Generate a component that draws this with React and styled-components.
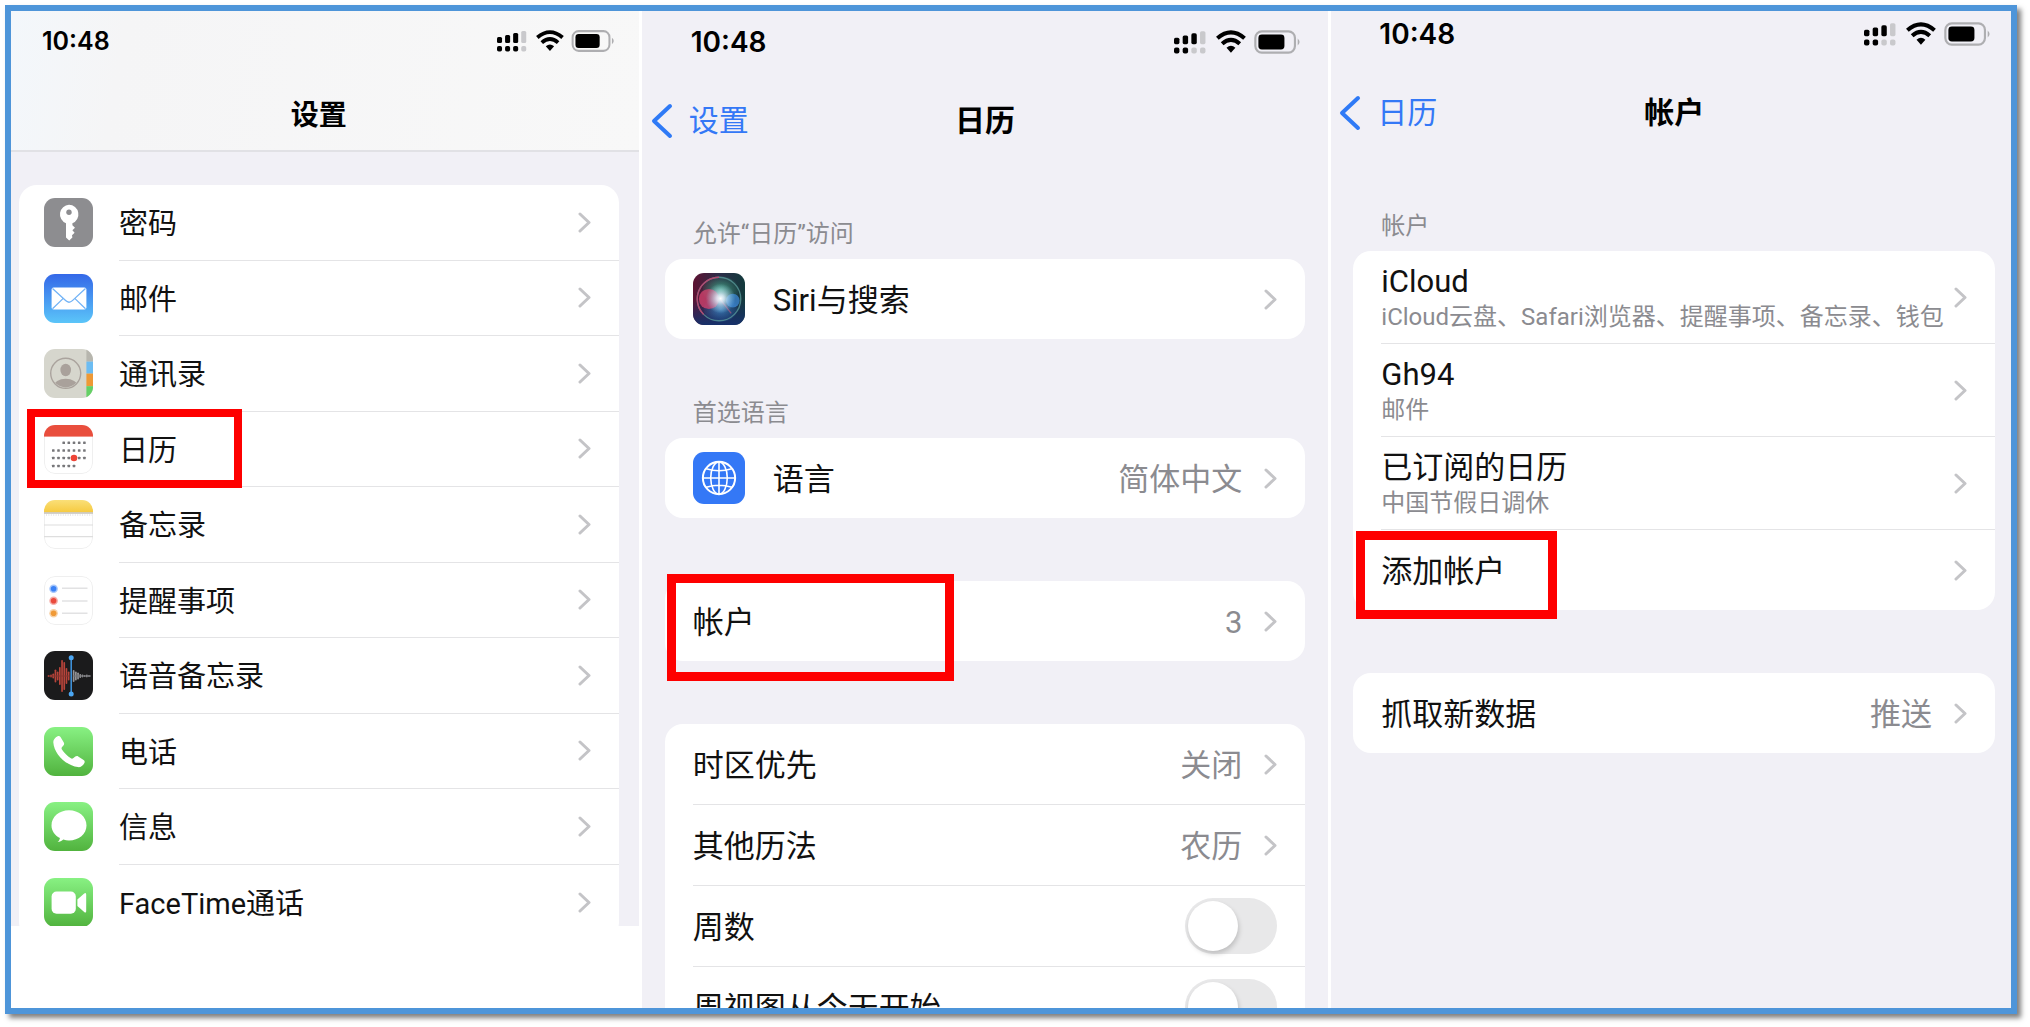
import React from 'react';
import styled, { createGlobalStyle, css, ThemeProvider } from 'styled-components';

const compact = { icon: 49, iconGap: 26, text: 29, inset: 25, row: 74, time: 25, title: 28, status: 119 };
const regular = { icon: 52, iconGap: 28, text: 31, inset: 28, row: 80, time: 28, title: 30, status: 128 };

const GlobalStyle = createGlobalStyle`
  * {
    box-sizing: border-box;
  }
  body {
    margin: 0;
    background: white;
    color: #111;
    font-family: Roboto, "Noto Sans CJK SC", sans-serif;
  }
`;

const Frame = styled.main`
  display: grid;
  grid-template-columns: 628fr 687fr 680fr;
  grid-template-rows: minmax(0, 1fr);
  column-gap: 3px;
  height: calc(100vh - 18px);
  margin: 5px 13px 13px 5px;
  border: 6px solid #4e95d9;
  background: white;
  box-shadow: 4px 4px 5px rgba(0,0,0,0.5);
`;

const Screen = styled.section`
  min-width: 0;
  overflow: hidden;
  background: #f1f0f6;
  margin-bottom: ${props => props.$cut || 0}px;
`;

const TopBar = styled.header`
  padding: ${props => props.$pad};
  ${props => props.$raised && css`
    background: linear-gradient(100deg, #f3f7fb 0, #f5f5f6 18%, #f8f8f8 100%);
    border-bottom: 2px solid #e1e1e5;
  `}
`;

const StatusBar = styled.div`
  display: flex;
  align-items: center;
  justify-content: space-between;
  padding: 0 3px 0 ${props => props.theme.inset - 2}px;
  height: 32px;
`;

const Time = styled.time`
  font: 600 ${props => props.theme.time}px/32px Inter, sans-serif;
  color: black;
`;

const StatusIcons = styled.svg`
  width: ${props => props.theme.status}px;
  height: 24px;
`;

const NavBar = styled.nav`
  display: grid;
  grid-template-columns: 1fr auto 1fr;
  align-items: center;
  height: 40px;
  margin-top: ${props => props.$gap}px;
`;

const BackLink = styled.a`
  display: flex;
  align-items: center;
  gap: 16px;
  margin-left: -14px;
  color: #3478f6;
  font-size: 30px;
  line-height: 40px;
  text-decoration: none;
`;

const Title = styled.h1`
  grid-column: 2;
  margin: 0;
  color: black;
  font-size: ${props => props.theme.title}px;
  line-height: 40px;
  font-weight: 700;
`;

const Content = styled.div`
  padding: ${props => props.$pad};
`;

const Group = styled.section`
  & + & {
    margin-top: 63px;
  }
`;

const GroupLabel = styled.h2`
  margin: 0;
  padding: 0 28px 14px;
  color: #8b8b90;
  font-size: 24px;
  line-height: 22px;
  font-weight: 400;
`;

const Card = styled.ul`
  display: grid;
  margin: 0;
  padding: 0;
  list-style: none;
  background: white;
  border-radius: 18px;
  ${props => props.$even && css`
    grid-auto-rows: 1fr;
    min-height: 755px;
  `}
`;

const Item = styled.li`
  display: grid;
  position: relative;
`;

const RowLine = styled.a`
  display: flex;
  align-items: center;
  gap: ${props => props.theme.iconGap}px;
  padding-left: ${props => props.theme.inset}px;
  color: inherit;
  text-decoration: none;
`;

const RowBody = styled.span`
  display: flex;
  flex: 1;
  align-self: stretch;
  align-items: center;
  min-width: 0;
  box-sizing: content-box;
  min-height: ${props => props.$tall ? 92 : props.theme.row}px;
  padding-right: 28px;
  ${Item}:not(:last-child) & {
    border-bottom: 1px solid #e4e4e6;
  }
`;

const RowText = styled.span`
  flex: 1;
  min-width: 0;
  white-space: nowrap;
  font-size: ${props => props.theme.text}px;
  line-height: 36px;
  padding-top: 4px;
`;

const RowNote = styled.small`
  display: block;
  color: #8b8b90;
  font-size: 24px;
  line-height: 34px;
`;

const RowValue = styled.span`
  margin-right: 22px;
  padding-top: 4px;
  color: #8b8b90;
  font-size: 31px;
  line-height: 36px;
`;

const Switch = styled.input`
  appearance: none;
  display: flex;
  width: 92px;
  height: 56px;
  margin: 0;
  padding: 3px;
  border-radius: 28px;
  background: #e8e8e9;
  &::before {
    content: "";
    width: 50px;
    height: 50px;
    border-radius: 50%;
    background: white;
    box-shadow: 1px 3px 5px rgba(0,0,0,0.18);
  }
  &:checked {
    justify-content: flex-end;
    background: #34c759;
  }
`;

const AppIcon = styled.svg`
  flex: none;
  width: ${props => props.theme.icon}px;
  height: ${props => props.theme.icon}px;
  border-radius: 11px;
`;

// red frame laid over a row
const Marker = styled.span`
  position: absolute;
  top: ${props => props.$top}px;
  left: ${props => props.$left}px;
  width: ${props => props.$width}px;
  height: ${props => props.$height}px;
  border: ${props => props.$line || 9}px solid #fe0000;
  z-index: 1;
  pointer-events: none;
`;

const Chevron = () => (
  <svg width="13" height="21" viewBox="0 0 13 21" fill="none" stroke="#c4c4c7" strokeWidth="3" strokeLinecap="round" strokeLinejoin="round">
    <path d="M2 2L11 10.5L2 19" />
  </svg>
);

const Status = ({ bars }) => (
  <StatusIcons viewBox="0 0 118 22" aria-hidden="true">
    <g>
      <rect x="0" y="7" width="5" height="6" rx="1.5" />
      <rect x="8" y="5" width="5" height="8" rx="1.5" />
      <rect x="16" y="3" width="5" height="10" rx="1.5" />
      <rect x="24" y="1" width="5" height="12" rx="1.5" fill="#c9c9cc" />
      {[0, 8, 16, 24].map((x, i) => (
        <rect key={x} x={x} y="16" width="5" height="5.5" rx="1.8" fill={i < bars ? 'black' : '#c9c9cc'} />
      ))}
    </g>
    <g fill="none" stroke="black" strokeWidth="3.8">
      <path d="M40 7.6Q52.5 -3.2 65 7.6" />
      <path d="M44.4 12.6Q52.5 5.6 60.6 12.6" />
    </g>
    <path d="M48.4 16.3Q52.5 12.8 56.6 16.3L52.5 21Z" />
    <rect x="75" y="1.2" width="36.5" height="19.6" rx="6" fill="none" stroke="#aeaeb1" strokeWidth="2" />
    <rect x="77.8" y="4" width="24" height="14" rx="3.2" />
    <path d="M114 7.8Q117.5 11 114 14.2Z" fill="#aeaeb1" />
  </StatusIcons>
);

const green = (id) => (
  <>
    <linearGradient id={id} x1="0" y1="0" x2="0" y2="1">
      <stop offset="0" stopColor="#88f183" />
      <stop offset="1" stopColor="#51b33e" />
    </linearGradient>
    <rect width="49" height="49" fill={`url(#${id})`} />
  </>
);

const whiteTile = <rect x="0.5" y="0.5" width="48" height="48" rx="10.5" fill="white" stroke="#efefef" />;

const calendarCols = [9.3, 14.5, 19.7, 24.8, 30, 35.2, 40.4];
const calendarRows = [[17.7, 2, 6], [25.5, 0, 6], [33, 0, 6], [41, 0, 4]];
const redWave = [[4.5, 1], [7, 1.5], [9.2, 2.5], [11.4, 6.5], [13.6, 4.5], [15.8, 9], [18, 16], [20.2, 14], [22.4, 8], [24.6, 4.5]];
const grayWave = [[29.6, 6], [31.8, 4.5], [34, 3.5], [36.2, 2], [38.4, 1.4], [40.6, 1], [42.8, 1.4], [45, 1]];

const icons = {
  key: (
    <>
      <rect width="49" height="49" fill="#8d8d90" />
      <path d="M25 6.8A9.6 9.6 0 0 1 28.4 25.3V27.2L31 29.7L28.4 32.2L30.6 34.8L28 37.3L28.4 39.6L25.2 42.4L22 39.4V25.3A9.6 9.6 0 0 1 25 6.8Z" fill="white" />
      <circle cx="25" cy="14.2" r="2.7" fill="#8d8d90" />
    </>
  ),
  mail: (
    <>
      <linearGradient id="mail" x1="0" y1="0" x2="0" y2="1">
        <stop offset="0" stopColor="#3468e8" />
        <stop offset="1" stopColor="#5bc5f9" />
      </linearGradient>
      <rect width="49" height="49" fill="url(#mail)" />
      <rect x="7.6" y="13.6" width="34.8" height="22" rx="2" fill="white" />
      <path d="M8.5 14.5L21.6 26.6Q25 29.8 28.4 26.6L41.5 14.5M8.5 34.8L19 24.6M41.5 34.8L31 24.6" fill="none" stroke="#72b3f6" strokeWidth="1.3" />
    </>
  ),
  contacts: (
    <>
      <clipPath id="face"><circle cx="21.7" cy="24.3" r="14" /></clipPath>
      <rect width="49" height="49" fill="#d6d6cd" />
      <rect x="42.4" width="7" height="12.6" fill="#b7b6ae" />
      <rect x="42.4" y="12.6" width="7" height="12" fill="#6cbcf2" />
      <rect x="42.4" y="24.6" width="7" height="12.6" fill="#ee9936" />
      <rect x="42.4" y="37.2" width="7" height="12" fill="#64d065" />
      <circle cx="21.7" cy="24.3" r="15" fill="none" stroke="#aaa39d" strokeWidth="1.4" />
      <ellipse cx="21.7" cy="21" rx="5.3" ry="6.2" fill="#a9a19b" />
      <ellipse cx="21.7" cy="37.4" rx="12" ry="7.6" fill="#a9a19b" clipPath="url(#face)" />
    </>
  ),
  calendar: (
    <>
      {whiteTile}
      <rect width="49" height="11.6" fill="#e94e3d" />
      {calendarRows.map(([y, from, to]) => calendarCols.slice(from, to + 1).map(x => (
        <rect key={`${x}-${y}`} x={x - 1.3} y={y - 1.3} width="2.6" height="2.6" rx="0.6" fill="#77777a" />
      )))}
      <circle cx="30" cy="33" r="3.3" fill="#ee4436" />
    </>
  ),
  notes: (
    <>
      <linearGradient id="notes" x1="0" y1="0" x2="0" y2="1">
        <stop offset="0" stopColor="#fadf78" />
        <stop offset="1" stopColor="#f6ca40" />
      </linearGradient>
      {whiteTile}
      <rect width="49" height="12.4" fill="url(#notes)" />
      <path d="M0 13H49" stroke="#c4c0b8" strokeWidth="1.4" />
      <path d="M2 15H48" stroke="#d4d4d4" strokeWidth="1" strokeDasharray="1 1.4" />
      <path d="M0 25H49M0 36.6H49" stroke="#dedede" strokeWidth="1.2" />
    </>
  ),
  reminders: (
    <>
      {whiteTile}
      <path d="M18 12.2H43.5M18 25H43.5M18 37.2H43.5" stroke="#e2e2e3" strokeWidth="1.4" />
      {[['#3b82f6', 12.8], ['#ea4a3d', 24.8], ['#f09a37', 37.2]].map(([color, y]) => (
        <g key={y} fill={color}>
          <circle cx="9.6" cy={y} r="4.3" opacity="0.45" />
          <circle cx="9.6" cy={y} r="2.8" />
        </g>
      ))}
    </>
  ),
  voice: (
    <>
      <rect width="49" height="49" fill="#1b1b1c" />
      {redWave.map(([x, h]) => <rect key={x} x={x - 0.8} y={25 - h} width="1.7" height={h * 2} rx="0.8" fill="#b8443a" />)}
      {grayWave.map(([x, h]) => <rect key={x} x={x - 0.8} y={25 - h} width="1.7" height={h * 2} rx="0.8" fill="#949496" />)}
      <path d="M4 25H25" stroke="#8a352e" strokeWidth="1" />
      <path d="M29 25H47" stroke="#77777a" strokeWidth="1" />
      <path d="M27.2 6.5V43" stroke="#3d8fd6" strokeWidth="1.6" />
      <circle cx="27.2" cy="6.8" r="2.5" fill="#4ba6f2" />
      <circle cx="27.2" cy="43" r="2.5" fill="#4ba6f2" />
    </>
  ),
  phone: (
    <>
      {green('phone')}
      <path d="M9.3 15.2C9.2 12.8 11.2 10.4 13.6 9.2C14.8 8.6 15.8 8.9 16.5 10L19.8 15.5C20.4 16.6 20.2 17.6 19.4 18.5L17.9 20.3C17.4 21 17.4 21.7 17.9 22.5C20.2 26 23.3 29 26.9 31.3C27.7 31.8 28.4 31.8 29.1 31.2L31.3 29.6C32.2 28.9 33.2 28.8 34.2 29.4L39.6 33C40.7 33.8 41 34.7 40.4 35.9C39 38.6 36.6 40.4 33.9 40.1C22 38.5 10 27 9.3 15.2Z" fill="white" />
    </>
  ),
  messages: (
    <>
      {green('messages')}
      <path d="M25 8.2C34.8 8.2 42.5 14.8 42.5 23.4S34.8 38.4 25 38.4C23 38.4 21.1 38.2 19.3 37.6C17.6 39 15.8 39.9 13.6 40.1C15 38.9 15.8 37.3 15.9 35.9C10.7 33.2 7.5 28.7 7.5 23.4C7.5 14.8 15.2 8.2 25 8.2Z" fill="white" />
    </>
  ),
  facetime: (
    <>
      {green('facetime')}
      <rect x="7.6" y="13.6" width="24.2" height="22.2" rx="5" fill="white" />
      <path d="M33.4 21.4L40.2 15.4Q42.2 14 42.2 16.4V33Q42.2 35.4 40.2 34L33.4 28Z" fill="white" />
    </>
  ),
  siri: (
    <>
      <linearGradient id="siriBg" x1="0" y1="0" x2="1" y2="0">
        <stop offset="0" stopColor="#5e1232" />
        <stop offset="0.5" stopColor="#2c2c48" />
        <stop offset="1" stopColor="#123a3c" />
      </linearGradient>
      <linearGradient id="siriLow" x1="0" y1="0" x2="0" y2="1">
        <stop offset="0.5" stopColor="#16306a" stopOpacity="0" />
        <stop offset="1" stopColor="#16306a" />
      </linearGradient>
      <radialGradient id="siriGreen">
        <stop offset="0" stopColor="#4aa588" />
        <stop offset="1" stopColor="#2f8468" stopOpacity="0.15" />
      </radialGradient>
      <radialGradient id="siriBlue">
        <stop offset="0" stopColor="#4a9fe0" />
        <stop offset="1" stopColor="#2c6fb4" stopOpacity="0.2" />
      </radialGradient>
      <radialGradient id="siriGlow">
        <stop offset="0" stopColor="white" />
        <stop offset="0.25" stopColor="#e4f4ff" stopOpacity="0.85" />
        <stop offset="1" stopColor="#8fd0e8" stopOpacity="0" />
      </radialGradient>
      <rect width="49" height="49" fill="url(#siriBg)" />
      <rect width="49" height="49" fill="url(#siriLow)" />
      <ellipse cx="26" cy="16" rx="17" ry="13" fill="url(#siriGreen)" />
      <ellipse cx="26" cy="34" rx="16" ry="12" fill="url(#siriBlue)" opacity="0.7" />
      <circle cx="15" cy="24.5" r="9.5" fill="#d8436f" opacity="0.75" />
      <circle cx="37.5" cy="26" r="6.5" fill="#3f8fe0" opacity="0.7" />
      <path d="M25 24L36 38" stroke="#c8577f" strokeWidth="1.2" opacity="0.6" />
      <circle cx="24.5" cy="24.5" r="20.5" fill="none" stroke="#5b9c9c" strokeWidth="1.3" opacity="0.75" />
      <path d="M24.5 4A20.5 20.5 0 0 0 10 39" fill="none" stroke="#b04a70" strokeWidth="1.3" />
      <circle cx="26" cy="24" r="14" fill="url(#siriGlow)" />
    </>
  ),
  globe: (
    <>
      <rect width="49" height="49" fill="#3478f6" />
      <g fill="none" stroke="white" strokeWidth="1.5">
        <circle cx="24.5" cy="24.5" r="15.2" strokeWidth="1.9" />
        <ellipse cx="24.5" cy="24.5" rx="7.8" ry="15.2" />
        <path d="M24.5 9.3V39.7M9.3 24.5H39.7M12.4 15.8Q24.5 19.4 36.6 15.8M12.4 33.2Q24.5 29.6 36.6 33.2" />
      </g>
    </>
  ),
};

const Row = ({ icon, text, note, value, toggle, children }) => (
  <Item>
    <RowLine {...(toggle ? { as: 'label' } : { href: '#' })}>
      {icon && <AppIcon viewBox="0 0 49 49" aria-hidden="true">{icons[icon]}</AppIcon>}
      <RowBody $tall={!!note}>
        <RowText>
          {text}
          {note && <RowNote>{note}</RowNote>}
        </RowText>
        {value && <RowValue>{value}</RowValue>}
        {toggle ? <Switch type="checkbox" role="switch" /> : <Chevron />}
      </RowBody>
    </RowLine>
    {children}
  </Item>
);

const Back = ({ children }) => (
  <BackLink href="#">
    <svg width="22" height="36" viewBox="0 0 22 36" fill="none" stroke="#2f7af6" strokeWidth="4" strokeLinecap="round" strokeLinejoin="round">
      <path d="M19 3L3 18L19 33" />
    </svg>
    {children}
  </BackLink>
);

const Settings = () => (
  <ThemeProvider theme={compact}>
    <Screen $cut={82}>
      <TopBar $raised $pad="14px 20px 14px 8px">
        <StatusBar>
          <Time>10:48</Time>
          <Status bars={3} />
        </StatusBar>
        <NavBar $gap={39}><Title>设置</Title></NavBar>
      </TopBar>
      <Content $pad="33px 20px 0 8px">
        <Card $even>
          <Row icon="key" text="密码" />
          <Row icon="mail" text="邮件" />
          <Row icon="contacts" text="通讯录" />
          <Row icon="calendar" text="日历">
            <Marker $top={-3} $left={8} $width={215} $height={79} $line={8} />
          </Row>
          <Row icon="notes" text="备忘录" />
          <Row icon="reminders" text="提醒事项" />
          <Row icon="voice" text="语音备忘录" />
          <Row icon="phone" text="电话" />
          <Row icon="messages" text="信息" />
          <Row icon="facetime" text="FaceTime通话" />
        </Card>
      </Content>
    </Screen>
  </ThemeProvider>
);

const CalendarSettings = () => (
  <Screen>
    <TopBar $pad="15px 23px 0">
      <StatusBar>
        <Time>10:48</Time>
        <Status bars={2} />
      </StatusBar>
      <NavBar $gap={43}>
        <Back>设置</Back>
        <Title>日历</Title>
      </NavBar>
    </TopBar>
    <Content $pad="82px 23px 0">
      <Group>
        <GroupLabel>允许“日历”访问</GroupLabel>
        <Card><Row icon="siri" text="Siri与搜索" /></Card>
      </Group>
      <Group>
        <GroupLabel>首选语言</GroupLabel>
        <Card><Row icon="globe" text="语言" value="简体中文" /></Card>
      </Group>
      <Group>
        <Card>
          <Row text="帐户" value="3">
            <Marker $top={-7} $left={2} $width={287} $height={107} />
          </Row>
        </Card>
      </Group>
      <Group>
        <Card>
          <Row text="时区优先" value="关闭" />
          <Row text="其他历法" value="农历" />
          <Row text="周数" toggle />
          <Row text="周视图从今天开始" toggle />
        </Card>
      </Group>
    </Content>
  </Screen>
);

const Accounts = () => (
  <Screen>
    <TopBar $pad="7px 16px 0 22px">
      <StatusBar>
        <Time>10:48</Time>
        <Status bars={2} />
      </StatusBar>
      <NavBar $gap={43}>
        <Back>日历</Back>
        <Title>帐户</Title>
      </NavBar>
    </TopBar>
    <Content $pad="82px 16px 0 22px">
      <Group>
        <GroupLabel>帐户</GroupLabel>
        <Card>
          <Row text="iCloud" note="iCloud云盘、Safari浏览器、提醒事项、备忘录、钱包" />
          <Row text="Gh94" note="邮件" />
          <Row text="已订阅的日历" note="中国节假日调休" />
          <Row text="添加帐户">
            <Marker $top={1} $left={3} $width={201} $height={88} />
          </Row>
        </Card>
      </Group>
      <Group>
        <Card><Row text="抓取新数据" value="推送" /></Card>
      </Group>
    </Content>
  </Screen>
);

export default function App() {
  return (
    <ThemeProvider theme={regular}>
      <GlobalStyle />
      <Frame>
        <Settings />
        <CalendarSettings />
        <Accounts />
      </Frame>
    </ThemeProvider>
  );
}
